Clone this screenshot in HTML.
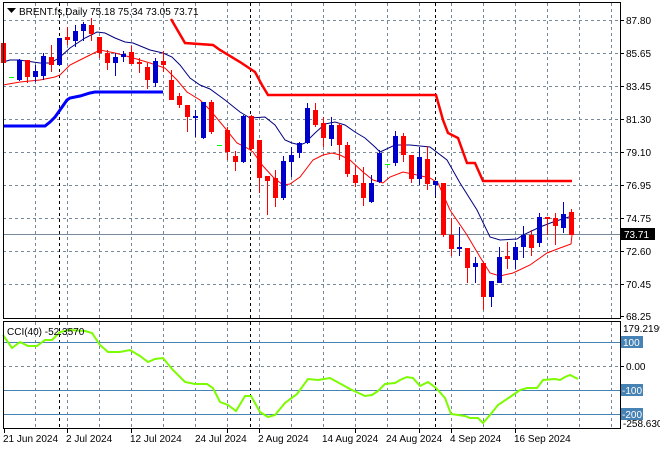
<!DOCTYPE html><html><head><style>
body{margin:0;background:#fff;width:660px;height:450px;overflow:hidden}
svg{display:block;font-family:"Liberation Sans",sans-serif;font-size:10px}
</style></head><body>
<svg width="660" height="450" viewBox="0 0 660 450">
<rect width="660" height="450" fill="#fff"/>
<g stroke="#778899" stroke-dasharray="3,3" stroke-width="1">
<path d="M3 20.5H620M3 53.5H620M3 86.5H620M3 119.5H620M3 152.5H620M3 185.5H620M3 218.5H620M3 251.5H620M3 284.5H620M3 366.5H620"/>
<path d="M35.5 3V318M67.5 3V318M99.5 3V318M131.5 3V318M163.5 3V318M195.5 3V318M227.5 3V318M259.5 3V318M291.5 3V318M323.5 3V318M355.5 3V318M387.5 3V318M419.5 3V318M451.5 3V318M483.5 3V318M515.5 3V318M547.5 3V318M579.5 3V318M611.5 3V318"/>
<path d="M35.5 322V428M67.5 322V428M99.5 322V428M131.5 322V428M163.5 322V428M195.5 322V428M227.5 322V428M259.5 322V428M291.5 322V428M323.5 322V428M355.5 322V428M387.5 322V428M419.5 322V428M451.5 322V428M483.5 322V428M515.5 322V428M547.5 322V428M579.5 322V428M611.5 322V428"/>
</g>
<g stroke="#000" stroke-dasharray="3,3"><path d="M59.5 3V318M250.5 3V318M435.5 3V318M59.5 322V428M250.5 322V428M435.5 322V428"/></g>
<path d="M3 234.5H620" stroke="#778899"/>
<g stroke="#4682b4"><path d="M3 342.5H620M3 390.5H620M3 414.5H620"/></g>
<!-- thick channels -->
<polyline fill="none" stroke="#0000ff" stroke-width="3" points="3,126 45,126 50,122 55,117 60,110 67,100 70,98 80,96 90,93 95,92 163,92"/>
<polyline fill="none" stroke="#ff0000" stroke-width="2.5" points="171,19 185,43 213,45 220,50 240,62 255,72 262,85 268,95 436,95 443,120 448,133 458,138 467,163 475,163 483,181 572,181"/>
<!-- MAs -->
<polyline fill="none" stroke="#000080" stroke-width="1" points="3,62 10,60 19,60 40,63 50,63 59,58 70,48 85,38 97,32 105,33 115,38 125,42 133,43 150,50 163,53 172,57 180,65 190,78 200,85 210,89 225,100 240,112 250,118 265,117 275,125 285,140 292,143 300,145 305,143 315,133 325,124 335,122 345,125 355,132 365,138 375,147 380,152 395,145 410,145 430,147 447,160 460,183 477,210 490,237 500,240 517,239 523,235 540,227 553,222 572,216"/>
<polyline fill="none" stroke="#ff0000" stroke-width="1" points="3,85 20,82 40,80 55,77 60,75 70,65 80,60 90,55 100,50 115,53 130,57 150,63 165,68 177,80 187,92 200,100 210,110 225,128 237,143 247,148 253,152 263,166 273,177 283,185 290,184 300,177 313,160 323,155 332,153 340,155 350,160 363,172 373,180 383,183 390,177 403,172 417,175 430,178 438,183 450,210 467,235 480,257 490,273 500,276 513,273 530,265 547,253 560,248 571,244 572,235"/>
<!-- candles -->
<g stroke-width="1" shape-rendering="crispEdges">
<g stroke="#ff0000" fill="#ff0000">
<path d="M3.5 40V65M27.5 60V83M51.5 45V72M67.5 27V45M91.5 18V41M99.5 37V58M107.5 50V70M131.5 46V64M139.5 58V73M147.5 63V89M163.5 51V72M171.5 70V100M179.5 93V108M187.5 105V132M211.5 100V134M227.5 127V160M235.5 151V171M251.5 115V150M259.5 140V193M267.5 176V215M275.5 170V207M315.5 103V127M323.5 117V147M339.5 123V160M347.5 142V177M355.5 165V187M363.5 167V206M403.5 133V162M411.5 155V183M427.5 146V190M443.5 183V237M451.5 218V256M467.5 248V283M483.5 263V310M507.5 242V269M531.5 230V256M547.5 218V235M555.5 213V245M571.5 209V235"/>
<path stroke="none" d="M1 43h5v20h-5zM25 60h5v17h-5zM49 57h5v8h-5zM65 37h5v3h-5zM89 25h5v9h-5zM97 37h5v16h-5zM105 53h5v10h-5zM129 52h5v12h-5zM137 62h5v2h-5zM145 67h5v13h-5zM161 61h5v4h-5zM169 80h5v20h-5zM177 96h5v9h-5zM185 105h5v12h-5zM209 102h5v30h-5zM225 130h5v22h-5zM233 156h5v6h-5zM249 116h5v33h-5zM257 140h5v38h-5zM265 176h5v5h-5zM273 178h5v20h-5zM313 110h5v15h-5zM321 123h5v15h-5zM337 125h5v20h-5zM345 145h5v29h-5zM353 175h5v8h-5zM361 183h5v15h-5zM401 136h5v19h-5zM409 155h5v24h-5zM425 159h5v25h-5zM441 183h5v52h-5zM449 235h5v14h-5zM465 248h5v20h-5zM481 263h5v34h-5zM505 256h5v3h-5zM529 235h5v13h-5zM545 217h5v2h-5zM553 218h5v8h-5zM569 212h5v23h-5z"/>
</g>
<g stroke="#0000cc" fill="#0000cc">
<path d="M19.5 59V81M35.5 65V82M43.5 53V80M59.5 38V65M75.5 25V47M83.5 22V41M115.5 53V76M123.5 51V62M155.5 58V87M195.5 110V137M203.5 102V139M243.5 115V163M283.5 156V200M291.5 147V177M299.5 142V158M307.5 103V144M331.5 117V146M371.5 175V203M379.5 150V183M395.5 131V166M419.5 147V185M435.5 181V196M459.5 227V256M475.5 257V283M491.5 281V307M499.5 247V283M515.5 242V269M523.5 226V258M539.5 213V247M563.5 202V233"/>
<path stroke="none" d="M17 60h5v20h-5zM33 71h5v6h-5zM41 56h5v20h-5zM57 38h5v27h-5zM73 31h5v10h-5zM81 24h5v7h-5zM113 57h5v6h-5zM121 54h5v3h-5zM153 61h5v22h-5zM193 116h5v2h-5zM201 102h5v36h-5zM241 116h5v46h-5zM281 161h5v37h-5zM289 155h5v7h-5zM297 143h5v10h-5zM305 108h5v35h-5zM329 125h5v14h-5zM369 183h5v19h-5zM377 153h5v29h-5zM393 136h5v27h-5zM417 157h5v22h-5zM433 181h5v4h-5zM457 247h5v2h-5zM473 263h5v4h-5zM489 281h5v16h-5zM497 257h5v26h-5zM513 247h5v13h-5zM521 235h5v12h-5zM537 217h5v26h-5zM561 214h5v14h-5z"/>
</g>
<path stroke="#00ff00" d="M9 77.5h5M217 145.5h5M385 164.5h5"/>
</g>
<!-- CCI -->
<polyline fill="none" stroke="#7cfc00" stroke-width="2" points="3,335 12,348 20,342 28,346 37,346 45,340 52,340 60,332 70,330 85,331 92,333 100,345 108,352 120,352 130,350 140,356 148,362 155,359 163,358 172,369 185,382 195,384 207,384 213,388 220,402 228,405 236,411 245,396 251,396 260,412 268,417 275,415 285,403 297,394 308,379 318,380 330,378 350,389 365,396 372,395 378,391 385,384 395,383 400,380 407,377 413,378 420,386 428,382 436,388 445,398 451,414 465,416 470,418 478,418 483,423 490,415 498,405 510,397 520,390 527,388 537,388 543,380 555,379 560,380 565,377 570,375 578,379"/>
<!-- borders -->
<rect x="3.5" y="2.5" width="617" height="316" fill="none" stroke="#000"/>
<rect x="3.5" y="321.5" width="617" height="107" fill="none" stroke="#000"/>
<g stroke="#000"><path d="M620 20.5h4M620 53.5h4M620 86.5h4M620 119.5h4M620 152.5h4M620 185.5h4M620 218.5h4M620 251.5h4M620 284.5h4M620 316.5h4M620 366.5h4"/>
<path d="M4.5 429v4M67.5 429v4M131.5 429v4M227.5 429v4M259.5 429v4M355.5 429v4M419.5 429v4M451.5 429v4M515.5 429v4"/></g>
<!-- text -->
<path d="M7 8h9l-4.5 5z" fill="#000"/>
<text x="19" y="15" fill="#000">BRENT.fs,Daily  75.18 75.34 73.05 73.71</text>
<text x="7" y="335" fill="#000">CCI(40) -52.3570</text>
<g fill="#000">
<text x="626" y="24">87.80</text><text x="626" y="57">85.65</text><text x="626" y="90">83.45</text><text x="626" y="123">81.30</text><text x="626" y="156">79.10</text><text x="626" y="189">76.95</text><text x="626" y="222">74.75</text><text x="626" y="255">72.60</text><text x="626" y="288">70.45</text><text x="626" y="320">68.25</text>
<text x="623" y="332">179.2199</text><text x="626" y="370">0.00</text><text x="623" y="427">-258.630</text>
</g>
<rect x="621" y="228" width="34" height="12" fill="#000"/><text x="624" y="238" fill="#fff">73.71</text>
<rect x="621" y="336" width="22" height="12" fill="#4682b4"/><text x="623" y="346" fill="#fff">100</text>
<rect x="621" y="384" width="22" height="12" fill="#4682b4"/><text x="622" y="394" fill="#fff">-100</text>
<rect x="621" y="408" width="22" height="12" fill="#4682b4"/><text x="622" y="418" fill="#fff">-200</text>
<g fill="#000">
<text x="3" y="442">21 Jun 2024</text><text x="66" y="442">2 Jul 2024</text><text x="130" y="442">12 Jul 2024</text><text x="195" y="442">24 Jul 2024</text><text x="258" y="442">2 Aug 2024</text><text x="322" y="442">14 Aug 2024</text><text x="386" y="442">24 Aug 2024</text><text x="450" y="442">4 Sep 2024</text><text x="514" y="442">16 Sep 2024</text>
</g>
</svg>
</body></html>
